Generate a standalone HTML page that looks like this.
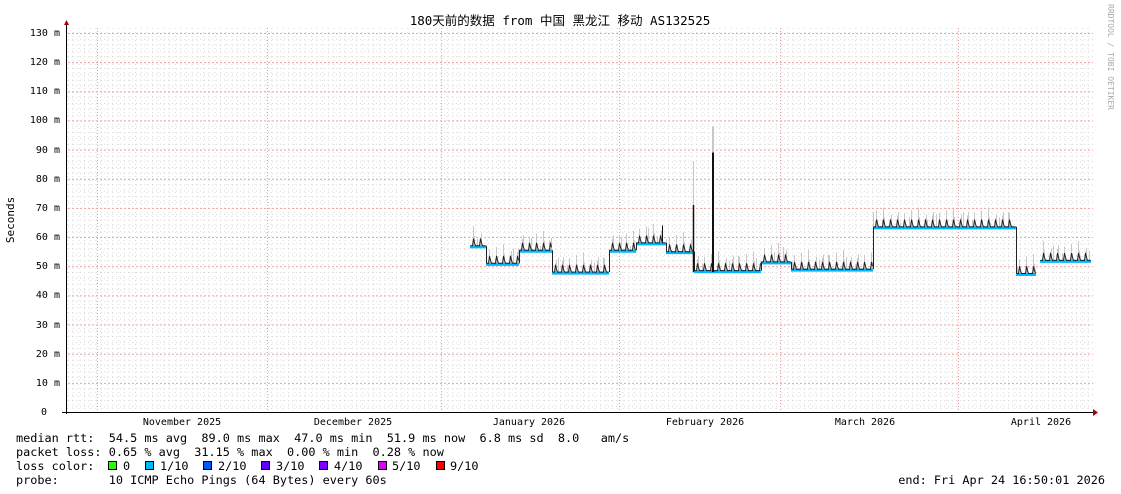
<!DOCTYPE html>
<html><head><meta charset="utf-8"><style>
html,body{margin:0;padding:0;background:#fff;width:1121px;height:494px;overflow:hidden}
svg{display:block}
text{font-family:"DejaVu Sans Mono","Liberation Mono",monospace;font-size:10px;fill:#000}
.lg{font-size:11.85px}
</style></head><body>
<svg width="1121" height="494" viewBox="0 0 1121 494" xmlns="http://www.w3.org/2000/svg">
<defs>
<pattern id="gv" x="67" y="0" width="5.67" height="4" patternUnits="userSpaceOnUse"><rect x="0" y="0" width="1" height="1" fill="#d8d8d8"/></pattern>
<pattern id="gh" x="0" y="33" width="4" height="5.83" patternUnits="userSpaceOnUse"><rect x="0" y="0" width="1" height="1" fill="#d8d8d8"/></pattern>
<pattern id="mh" x="0" y="33" width="4" height="29.15" patternUnits="userSpaceOnUse"><rect x="0" y="0" width="2" height="1" fill="#f0a0a0"/></pattern>
</defs>
<rect x="67" y="28" width="1026" height="384" fill="url(#gv)"/>
<rect x="67" y="30" width="1026" height="382" fill="url(#gh)"/>
<rect x="67" y="30" width="1026" height="382" fill="url(#mh)"/>
<g stroke="#f0a0a0" stroke-dasharray="1,2" stroke-width="1">
<line x1="97.5" y1="28" x2="97.5" y2="412"/><line x1="267.5" y1="28" x2="267.5" y2="412"/>
<line x1="441.5" y1="28" x2="441.5" y2="412"/><line x1="619.5" y1="28" x2="619.5" y2="412"/>
<line x1="780.5" y1="28" x2="780.5" y2="412"/><line x1="958.5" y1="28" x2="958.5" y2="412"/>
</g>
<g id="data"></g>
<line x1="66.5" y1="24" x2="66.5" y2="414" stroke="#000"/>
<line x1="62" y1="412.5" x2="1096" y2="412.5" stroke="#000"/>
<polygon points="64,25 69,25 66.5,20" fill="#a00"/>
<polygon points="1093,409 1093,416 1098,412.5" fill="#a00"/>
<text x="560" y="25" text-anchor="middle" style="font-family:'DejaVu Sans Mono','Noto Sans CJK SC',monospace;font-size:12.5px">180天前的数据 from 中国 黑龙江 移动 AS132525</text>
<text x="1108" y="4" transform="rotate(90 1108 4)" style="font-size:8px;fill:#aaa">RRDTOOL / TOBI OETIKER</text>
<text x="14" y="220" transform="rotate(-90 14 220)" text-anchor="middle" style="font-size:11px">Seconds</text>
<g text-anchor="end">
<text x="60" y="36">130 m</text><text x="60" y="65">120 m</text><text x="60" y="94">110 m</text><text x="60" y="123">100 m</text><text x="60" y="153">90 m</text><text x="60" y="182">80 m</text><text x="60" y="211">70 m</text><text x="60" y="240">60 m</text><text x="60" y="269">50 m</text><text x="60" y="298">40 m</text><text x="60" y="328">30 m</text><text x="60" y="357">20 m</text><text x="60" y="386">10 m</text><text x="47" y="415">0</text>
</g>
<g text-anchor="middle">
<text x="182" y="425">November 2025</text><text x="353" y="425">December 2025</text><text x="529" y="425">January 2026</text><text x="705" y="425">February 2026</text><text x="865" y="425">March 2026</text><text x="1041" y="425">April 2026</text>
</g>
<text class="lg" x="16" y="442" xml:space="preserve">median rtt:  54.5 ms avg  89.0 ms max  47.0 ms min  51.9 ms now  6.8 ms sd  8.0   am/s</text>
<text class="lg" x="16" y="456" xml:space="preserve">packet loss: 0.65 % avg  31.15 % max  0.00 % min  0.28 % now</text>
<text class="lg" x="16" y="470" xml:space="preserve">loss color:</text>
<text class="lg" x="16" y="484" xml:space="preserve">probe:       10 ICMP Echo Pings (64 Bytes) every 60s</text>
<text class="lg" x="1105" y="484" text-anchor="end">end: Fri Apr 24 16:50:01 2026</text>
<g stroke="#000" stroke-width="1">
<rect x="108.5" y="461.5" width="8" height="8" fill="#26ff00"/>
<rect x="145.5" y="461.5" width="8" height="8" fill="#00b8ff"/>
<rect x="203.5" y="461.5" width="8" height="8" fill="#0059ff"/>
<rect x="261.5" y="461.5" width="8" height="8" fill="#5e00ff"/>
<rect x="319.5" y="461.5" width="8" height="8" fill="#7e00ff"/>
<rect x="378.5" y="461.5" width="8" height="8" fill="#dd00ff"/>
<rect x="436.5" y="461.5" width="8" height="8" fill="#ff0000"/>
</g>
<text class="lg" x="123" y="470">0</text><text class="lg" x="160" y="470">1/10</text><text class="lg" x="218" y="470">2/10</text><text class="lg" x="276" y="470">3/10</text><text class="lg" x="334" y="470">4/10</text><text class="lg" x="392" y="470">5/10</text><text class="lg" x="450" y="470">9/10</text>
</svg>
<script>
var segs=[[470,485,57],[486,518,51],[519,551,55.5],[552,608,48],[609,635,55.5],[636,665,58],[666,692,55],[694,760,48.5],[761,790,51.5],[791,872,49],[873,1015,63.5],[1016,1035,47.5],[1040,1090,52]];
function y(v){return 412-v*2.915}
var g=document.getElementById('data'),s='';
segs.forEach(function(sg,i){
 var med='';
 for(var x=sg[0];x<=sg[1];x++){
  var ph=(x-sg[0])%7;
  var spike=ph===3;
  var v=sg[2]+(spike?2.5:(ph===4?1:0));
  if(spike||ph===4||((x*11)%9===0)){
   var top=sg[2]+1.5+((x*13)%5)*0.9+(spike?1.5:0);
   s+='<line x1="'+(x+.5)+'" y1="'+y(top)+'" x2="'+(x+.5)+'" y2="'+y(sg[2])+'" stroke="#c8c8c8"/>';
  }
  med+=(med?' L':'M')+(x+.5)+' '+y(v).toFixed(1);
 }
 s+='<path d="M'+sg[0]+' '+(y(sg[2])+1)+' L'+(sg[1]+1)+' '+(y(sg[2])+1)+'" stroke="#00b8ff" stroke-width="3"/>';
 s+='<path d="'+med+'" stroke="#222" fill="none" stroke-width="1"/>';
 if(i>0){var p=segs[i-1];if(sg[0]-p[1]<3)s+='<line x1="'+(sg[0]+.5)+'" y1="'+y(p[2])+'" x2="'+(sg[0]+.5)+'" y2="'+y(sg[2])+'" stroke="#222"/>';}
});
s+='<line x1="693.5" y1="'+y(86)+'" x2="693.5" y2="'+y(48)+'" stroke="#c8c8c8"/>';
s+='<line x1="693.5" y1="'+y(71)+'" x2="693.5" y2="'+y(48)+'" stroke="#111" stroke-width="1.5"/>';
s+='<line x1="713" y1="'+y(98)+'" x2="713" y2="'+y(48)+'" stroke="#c8c8c8" stroke-width="2"/>';
s+='<line x1="713" y1="'+y(89)+'" x2="713" y2="'+y(48)+'" stroke="#111" stroke-width="2"/>';
s+='<line x1="662.5" y1="'+y(64)+'" x2="662.5" y2="'+y(58)+'" stroke="#111"/>';
g.innerHTML=s;
</script>
</body></html>
